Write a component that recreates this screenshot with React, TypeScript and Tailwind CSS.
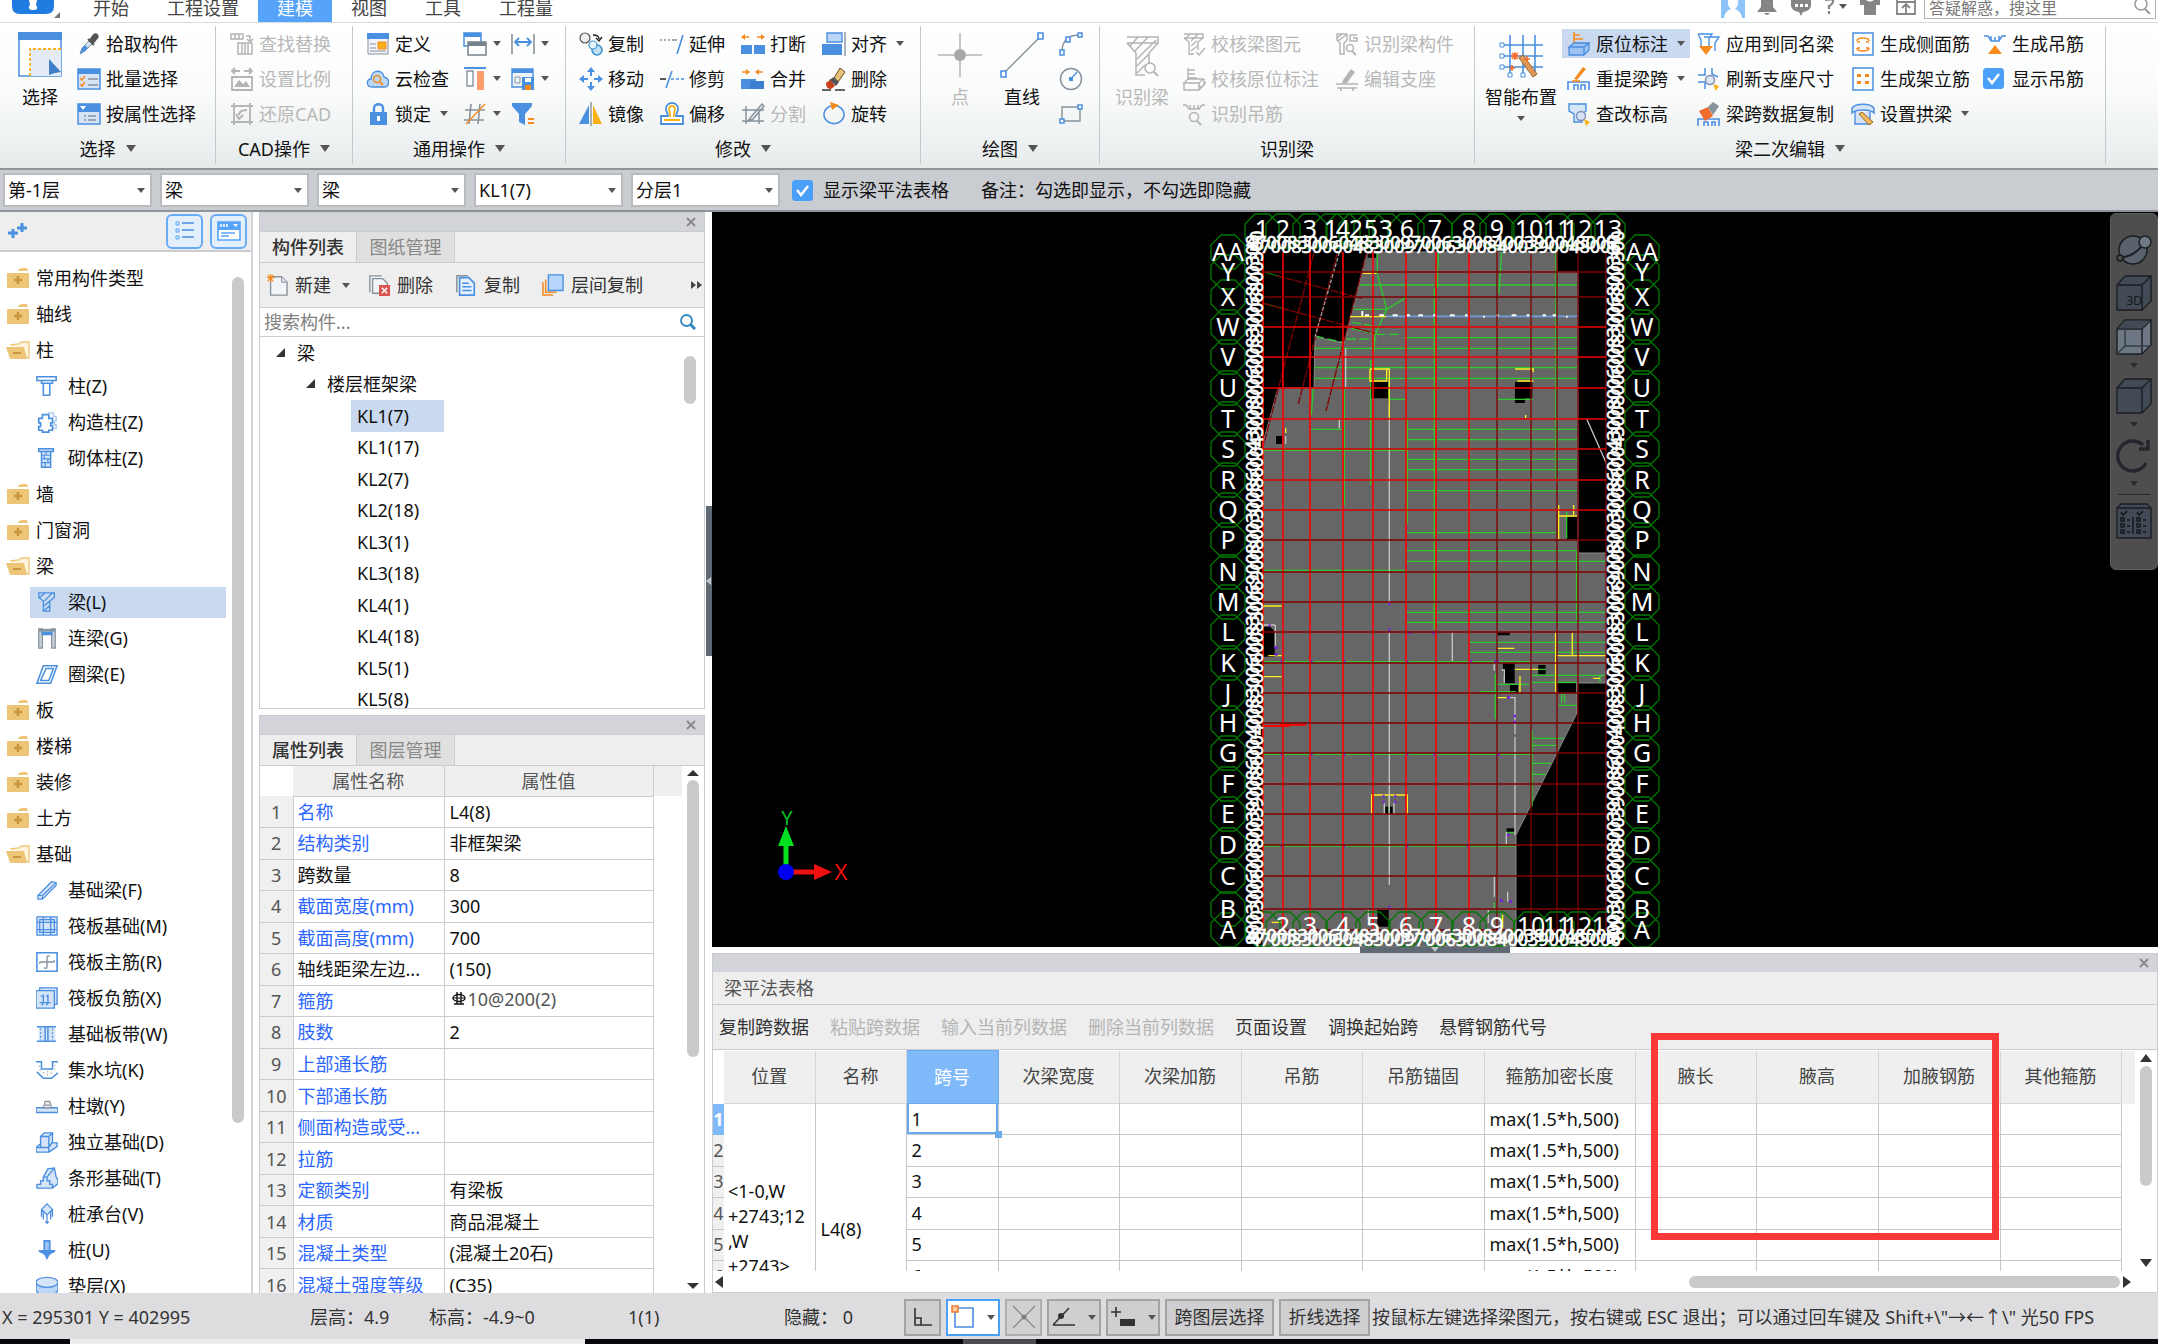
import { Fragment, useState } from "react";
import type { ReactNode } from "react";

const BLUE = "#4a8fe0";
const PALE = "#d6e4f7";
const ORANGE = "#f58a1f";
const YELLOW = "#f9b115";
const STEEL = "#87929c";
const OFF = "#b4b4b4";

// All small icons are drawn on a 24x24 board
const icons: Record<string, ReactNode> = {
  pick: (
    <>
      <path d="M3 22l2-6 8-8 3 3-8 8z" fill="#cfe3f8" stroke={STEEL} />
      <path d="M3 22l2-6 3-3 3 3-3 3z" fill={BLUE} />
      <path d="M11 7l6 6M13 8l4-5c2-2 5 1 3 3l-4 5z" fill="#555" stroke="#555" strokeWidth="2" />
    </>
  ),
  batch: (
    <>
      <path d="M1 2h22v20H1z" fill={PALE} stroke={BLUE} strokeWidth="1.5" />
      <path d="M1 2h22v5H1z" fill={BLUE} />
      <path d="M3 11l2 2 3-4M3 17l2 2 3-4" fill="none" stroke={ORANGE} strokeWidth="1.5" />
      <path d="M11 12h10M11 18h10" stroke={STEEL} strokeWidth="1.5" />
    </>
  ),
  byProp: (
    <>
      <path d="M1 2h22v20H1z" fill={PALE} stroke={BLUE} strokeWidth="1.5" />
      <path d="M1 2h22v8H1z" fill={BLUE} />
      <path d="M3 4h6L6 8z" fill="#fff" />
      <path d="M7 14h2M11 14h8M7 18h2M11 18h8" stroke={STEEL} strokeWidth="1.5" />
    </>
  ),
  findReplace: (
    <>
      <path d="M1 2h12v5H1zM5 2v5M9 2v5M8 11h14v11H8zM12 11v11M15 11v11M18 11v11" fill="none" stroke={OFF} strokeWidth="1.5" />
      <path d="M16 4h4v5M17 7l3 3 3-3" fill="none" stroke={OFF} strokeWidth="1.5" />
    </>
  ),
  scale: (
    <>
      <path d="M2 4h8M14 4h8M5 1L2 4l3 3M19 1l3 3-3 3" fill="none" stroke={OFF} strokeWidth="1.8" />
      <path d="M2 10h20v13H2z" fill="none" stroke={OFF} strokeWidth="1.8" />
      <path d="M4 20l5-7 4 4 3-3 4 6z" fill={OFF} />
    </>
  ),
  restore: (
    <>
      <path d="M1 4h22M4 1v22M20 1v22M1 20h22" fill="none" stroke={OFF} strokeWidth="1.8" />
      <path d="M9 13c0-4 3-5 8-5M6 12l3 5 4-4" fill="none" stroke={OFF} strokeWidth="2" />
    </>
  ),
  define: (
    <>
      <path d="M2 2h20v20H2z" fill="#f1f5fa" stroke={STEEL} />
      <path d="M1 1h22v6H1z" fill={BLUE} />
      <path d="M12 10h8v7h-8z" fill={YELLOW} stroke={ORANGE} />
      <path d="M4 12h6M4 16h6M4 19h16" stroke={STEEL} />
    </>
  ),
  cloud: (
    <>
      <path d="M6 20c-6 0-6-8-1-8 0-10 12-10 13-2 6 1 6 10 0 10z" fill="#bcd8f7" stroke={BLUE} strokeWidth="1.3" />
      <circle cx="11" cy="12" r="3.5" fill="none" stroke={ORANGE} strokeWidth="1.5" />
      <path d="M14 15l3 3" stroke={ORANGE} strokeWidth="1.8" />
    </>
  ),
  lock: (
    <>
      <path d="M8 11V6c0-5 9-5 9 0v5" fill="none" stroke={BLUE} strokeWidth="2.4" />
      <path d="M4 10h17v13H4z" fill={BLUE} />
      <path d="M11 14h3v5h-3z" fill="#fff" />
    </>
  ),
  windows: (
    <>
      <path d="M1 1h17v13H1z" fill="#fff" stroke={BLUE} strokeWidth="1.5" />
      <path d="M1 1h17v4H1z" fill={BLUE} />
      <path d="M5 10h18v13H5z" fill="#fff" stroke="#77828c" strokeWidth="1.5" />
      <path d="M5 10h18v4H5z" fill="#77828c" />
    </>
  ),
  dimension: (
    <>
      <path d="M1 2v20M23 2v20" stroke={STEEL} strokeWidth="1.6" />
      <path d="M4 10h16M8 6l-4 4 4 4M16 6l4 4-4 4" fill="none" stroke={BLUE} strokeWidth="1.8" />
    </>
  ),
  columns: (
    <>
      <path d="M1 1h22" stroke={BLUE} strokeWidth="2" />
      <path d="M4 4h6v15H4z" fill="#fff" stroke={STEEL} strokeWidth="1.4" />
      <path d="M14 4h7v19h-7z" fill="#fd9c6d" />
    </>
  ),
  saveAs: (
    <>
      <path d="M1 2h21v18H1z" fill="#eef3fa" stroke={BLUE} strokeWidth="1.4" />
      <path d="M1 2h21v4H1z" fill={BLUE} />
      <path d="M4 10h5v6H4z" fill="none" stroke={STEEL} />
      <path d="M11 10h12v13H11z" fill={BLUE} />
      <path d="M14 11h6v4h-6z" fill="#fff" />
      <path d="M14 18h6v5h-6z" fill={ORANGE} />
    </>
  ),
  axisGrid: (
    <>
      <path d="M2 8h20M1 18h20M8 2L6 22M17 2l-2 20" stroke={STEEL} strokeWidth="1.6" fill="none" />
      <path d="M22 2L3 22" stroke={ORANGE} strokeWidth="1.4" />
    </>
  ),
  filter: (
    <>
      <path d="M1 1h20v3l-7 8v11l-6-3v-8L1 4z" fill={BLUE} />
      <path d="M17 17h6M17 21h6" stroke={ORANGE} strokeWidth="1.8" />
    </>
  ),
  copy: (
    <>
      <circle cx="6" cy="6" r="5" fill="#eee" stroke="#555" strokeWidth="1.2" />
      <circle cx="18" cy="18" r="5" fill="#bfe0f8" stroke="#3f8fc9" strokeWidth="1.6" />
      <circle cx="14" cy="13" r="4" fill="#e6f3fc" stroke="#3f8fc9" strokeWidth="1.2" />
      <path d="M14 3c5 0 6 2 6 4M17 6l3 3 3-4" fill="none" stroke="#222" strokeWidth="1.4" />
    </>
  ),
  move: <path d="M12 0l4 5h-3v4h-2V5H8zM12 24l4-5h-3v-4h-2v4H8zM0 12l5-4v3h4v2H5v3zM24 12l-5-4v3h-4v2h4v3z" fill={BLUE} />,
  mirror: (
    <>
      <path d="M10 3v19H0z" fill={BLUE} />
      <path d="M14 3v19h9z" fill={YELLOW} />
      <path d="M12 0v24" stroke={STEEL} strokeWidth="1.4" />
    </>
  ),
  extend: (
    <>
      <path d="M0 8h2M4 8h2M8 8h2M12 8h5" stroke={STEEL} strokeWidth="1.5" />
      <path d="M23 3l-6 19" stroke={BLUE} strokeWidth="1.6" />
    </>
  ),
  trim: (
    <>
      <path d="M0 12h6" stroke="#444" strokeWidth="1.8" />
      <path d="M12 4L6 21M11 12h3M16 12h3M21 12h3" stroke={BLUE} strokeWidth="1.6" />
    </>
  ),
  offset: (
    <>
      <path d="M1 22v-8h7c0-3-2-4-2-7 0-8 12-8 12 0 0 3-2 4-2 7h7v8z" fill="#fff" stroke={BLUE} strokeWidth="1.8" />
      <path d="M4 18h16M10 15c1-4-1-5-1-8 0-4 6-4 6 0 0 3-2 4-1 8" fill="none" stroke={YELLOW} strokeWidth="1.8" />
    </>
  ),
  breakAt: (
    <>
      <path d="M0 13h11v9H0zM13 13h11v9H13z" fill={BLUE} />
      <path d="M4 2L0 5l4 3zM20 2l4 3-4 3z" fill={ORANGE} />
      <path d="M3 5h5M16 5h5" stroke={ORANGE} strokeWidth="1.6" />
    </>
  ),
  merge: (
    <>
      <path d="M0 12h15v10H0z" fill={BLUE} />
      <path d="M9 14h14v8H9z" fill="#3d7fd0" />
      <path d="M5 2l4 3-4 3zM18 2l-4 3 4 3z" fill={ORANGE} />
      <path d="M1 5h5M17 5h5" stroke={ORANGE} strokeWidth="1.6" />
    </>
  ),
  split: <path d="M1 8h22M1 19h22M5 4v18M18 8v14M21 2L10 15l-3 4 5-2L23 4z" fill="none" stroke={STEEL} strokeWidth="1.5" />,
  align: (
    <>
      <path d="M5 1h15v9H5z" fill="#bcd6f7" stroke={BLUE} strokeWidth="1.4" />
      <path d="M0 12h20v11H0z" fill={BLUE} />
      <path d="M23 0v24" stroke={STEEL} strokeWidth="1.4" />
    </>
  ),
  erase: (
    <>
      <path d="M12 11l6-10 5 4-7 10z" fill="#e8c27a" stroke="#6b4a1d" />
      <path d="M7 13l5-3 5 5-3 4z" fill="#555" />
      <path d="M4 16l4-3 5 6-4 3c-4 0-5-3-5-6z" fill="#c8401a" />
      <path d="M0 23h9M13 23h10" stroke="#333" strokeWidth="1.6" />
    </>
  ),
  rotate: (
    <>
      <path d="M15 4a10 9 0 1 1-6 0" fill="none" stroke={BLUE} strokeWidth="1.6" />
      <path d="M8 0l9 3-7 5z" fill={ORANGE} />
    </>
  ),
  arc: (
    <>
      <path d="M3 20C3 9 9 3 21 3" fill="none" stroke={STEEL} strokeWidth="1.3" />
      <path d="M1 18h4v5H1zM7 5h4v5H7zM19 1h4v4h-4z" fill="#fff" stroke={BLUE} strokeWidth="1.5" />
    </>
  ),
  circle: (
    <>
      <circle cx="12" cy="12" r="10.5" fill="none" stroke={STEEL} strokeWidth="1.5" />
      <path d="M12 12l6-7" stroke={BLUE} strokeWidth="1.3" />
      <path d="M10 10h4v4h-4z" fill={BLUE} />
    </>
  ),
  rect: (
    <>
      <path d="M3 5h18v14H3z" fill="none" stroke={STEEL} strokeWidth="1.4" />
      <path d="M1 17h4v4H1zM19 3h4v4h-4z" fill="#fff" stroke={BLUE} strokeWidth="1.5" />
    </>
  ),
  checkBeam: <path d="M2 2h19v4l-5 4v8M2 6l5 4v12h5M2 6h19M4 6l4-4M9 9l7-7M9 14l6-5M9 19l6-5M14 20l3 3 6-7" fill="none" stroke={OFF} strokeWidth="1.4" />,
  checkMark: <path d="M6 1v12M6 3h7M6 7h7M6 11h9M2 16l4-4h15l-4 4zM2 16h15v7H2zM17 23l5-5v-6M17 18l2 3 5-6" fill="none" stroke={OFF} strokeWidth="1.4" />,
  hangFind: (
    <>
      <path d="M1 3h3l3 4h10l3-4h3M8 3v4M12 3v4M16 3v4" fill="none" stroke={OFF} strokeWidth="1.5" />
      <circle cx="12" cy="15" r="4.5" fill="none" stroke={OFF} strokeWidth="1.6" />
      <path d="M15 19l4 4" stroke={OFF} strokeWidth="2" />
    </>
  ),
  beamPart: (
    <>
      <path d="M2 2h10v6l-3 3v11H5V11L2 8zM2 6l5-4M3 9l8-6M15 3h7M15 3v6h7V6h-4" fill="none" stroke={OFF} strokeWidth="1.5" />
      <circle cx="15" cy="16" r="3.5" fill="none" stroke={OFF} strokeWidth="1.5" />
      <path d="M17 19l4 4" stroke={OFF} strokeWidth="2" />
    </>
  ),
  editSeat: (
    <>
      <path d="M1 17h22M2 21h20M6 21v3M18 21v3" stroke={OFF} strokeWidth="1.6" />
      <path d="M8 13l8-11 4 3-8 11-5 1z" fill={OFF} />
    </>
  ),
  inPlace: (
    <>
      <path d="M7 0v12M7 3h6M7 7h9M7 11h6" stroke={ORANGE} strokeWidth="1.6" />
      <path d="M2 15l5-4h15l-5 4zM2 15h15v8H2zM17 15l5-4v7l-5 5z" fill="#9cc3f3" stroke={BLUE} strokeWidth="1.3" />
    </>
  ),
  respan: (
    <>
      <path d="M1 23v-8h21v8M7 23v-5h4v5M14 23v-5h4v5" fill="none" stroke={BLUE} strokeWidth="1.6" />
      <path d="M7 12l9-12 3 2-9 11z" fill={ORANGE} />
      <path d="M5 14h8" stroke={ORANGE} strokeWidth="1.6" />
    </>
  ),
  elevation: (
    <>
      <path d="M2 2h17v7l-4 3v8H7v-8L2 9z" fill={PALE} stroke={BLUE} strokeWidth="1.4" />
      <circle cx="14" cy="14" r="4.5" fill="#d9e2f5" stroke="#7a8fb8" strokeWidth="1.4" />
      <path d="M17 17l6 3-4 4z" fill={YELLOW} />
    </>
  ),
  applySame: (
    <>
      <path d="M1 2h14l-3 5v7M1 2l3 6v8M7 5h15l-4 6v8" fill="#fff" stroke={BLUE} strokeWidth="1.4" />
      <path d="M2 14h14l-7 9z" fill={ORANGE} />
    </>
  ),
  refreshSeat: (
    <>
      <path d="M8 1v7H1M15 1v6l6 3M8 22v-7H1" fill="none" stroke={BLUE} strokeWidth="1.5" />
      <circle cx="13" cy="13" r="4.5" fill="#dfe6f2" stroke="#7a8fb8" strokeWidth="1.5" />
      <path d="M16 17l6 2-3 5z" fill={YELLOW} />
    </>
  ),
  spanCopy: (
    <>
      <path d="M1 24v-7h21v7M7 24v-4h4v4M15 24v-4h3v4" fill="none" stroke={BLUE} strokeWidth="1.6" />
      <path d="M2 9l9-4 5 9-8 5z" fill="#ef6c2c" />
      <path d="M11 5l5-5 6 4-6 9z" fill={STEEL} />
    </>
  ),
  sideBar: (
    <>
      <path d="M2 1h20v22H2z" fill="#fff" stroke={BLUE} strokeWidth="1.5" />
      <path d="M6 9c0-4 12-4 12 0M6 10h3M15 10h3M6 16h3M15 16h3M6 16c0 4 12 4 12 0" fill="none" stroke={ORANGE} strokeWidth="1.6" />
    </>
  ),
  erectBar: (
    <>
      <path d="M2 1h20v22H2z" fill="#fff" stroke={BLUE} strokeWidth="1.5" />
      <path d="M6 7h4v3H6zM14 7h4v3h-4zM6 14h4v3H6zM14 14h4v3h-4z" fill={ORANGE} />
    </>
  ),
  arch: (
    <>
      <path d="M1 6c4-5 18-5 22 0v5c-4-4-18-4-22 0zM4 10v12h15V10" fill={PALE} stroke={BLUE} strokeWidth="1.4" />
      <path d="M8 12l10 11 4-3-11-10z" fill="#f4b860" stroke="#9a6a26" />
    </>
  ),
  hangBar: (
    <>
      <path d="M1 4h4l3 5h8l3-5h4M8 4v4M12 5v4M16 4v4" fill="none" stroke={BLUE} strokeWidth="1.5" />
      <path d="M12 13l7 9H5z" fill={ORANGE} />
    </>
  ),
  folder: (
    <>
      <path d="M1 7h22v15H1zM12 5c1-3 3-3 5-3h4l1 3z" fill="#edc577" />
      <path d="M12 10v8M8 14h8" stroke="#c8963e" strokeWidth="2.6" />
    </>
  ),
  folderOpen: (
    <>
      <path d="M4 7l9-1 2-2h8v16h-4" fill="#fdf3dc" stroke="#edc577" strokeWidth="1.3" />
      <path d="M0 9h18l3 12H4z" fill="#edc577" />
      <path d="M7 15h8" stroke="#c8963e" strokeWidth="2" />
    </>
  ),
  column: <path d="M1 2h21v4h-4v3H6V6H1zM6 6h12M8 9h7v13H8z" fill="#fff" stroke={BLUE} strokeWidth="1.7" />,
  structColumn: (
    <>
      <path d="M13 2h6v4h3v5h-2v4h2v4h-4" fill="none" stroke="#a9c8ee" strokeWidth="1.5" />
      <path d="M7 4h7v4h4v5h-2v3h2v5h-4v2H7v-2H3v-4h2v-4H3V8h4z" fill="#fff" stroke={BLUE} strokeWidth="1.8" />
    </>
  ),
  brickColumn: (
    <>
      <path d="M3 2h16v3H3zM6 5h10v17H6z" fill={PALE} stroke={BLUE} strokeWidth="1.6" />
      <path d="M6 9h10M6 13h10M6 17h10M11 5v4M9 9v4M13 13v4M10 17v5" stroke={BLUE} strokeWidth="1.3" />
    </>
  ),
  beam: <path d="M3 2h17v5l-5 4v11H8V11L3 7zM4 7l6-5M9 11l9-9M9 16l6-5M9 21l6-5" fill="none" stroke={BLUE} strokeWidth="1.4" />,
  linkBeam: (
    <>
      <path d="M3 2h4v21H3zM17 2h4v21h-4z" fill="#c7cfd4" stroke={STEEL} strokeWidth="1.3" />
      <path d="M3 2h18v3H3z" fill={STEEL} />
      <path d="M6 5h12v4H6z" fill={BLUE} />
    </>
  ),
  ringBeam: <path d="M8 3h15l-7 19H1zM11 6h8l-5 13H5z" fill="none" stroke={BLUE} strokeWidth="1.7" />,
  footBeam: <path d="M2 18L17 3l5 1v3L7 22H2zM2 18h5v4M7 18L22 4" fill={PALE} stroke={BLUE} strokeWidth="1.3" />,
  raft: <path d="M1 2h22v20H1zM4 5h16v14H4zM8 8h8v8H8zM1 8h7M16 8h7M1 16h7M16 16h7M8 2v6M16 2v6M8 16v6M16 16v6" fill={PALE} stroke={BLUE} strokeWidth="1.4" />,
  raftMain: (
    <>
      <path d="M1 2h22v20H1z" fill="#fff" stroke={BLUE} strokeWidth="1.7" />
      <path d="M4 12h16M12 6v12M4 12v2M20 12v-2M12 6c1-1 3-1 3 0M12 18c-1 1-3 1-3 0" fill="none" stroke={STEEL} strokeWidth="1.5" />
    </>
  ),
  raftNeg: (
    <>
      <path d="M4 4V1h19v18h-3M0 4h20v19H0z" fill={PALE} stroke={BLUE} strokeWidth="1.5" />
      <path d="M4 17h12M8 8v10M13 8v10M5 10h3M11 10h2M6 20l2-2M11 20l2-2" stroke={BLUE} strokeWidth="1.5" />
    </>
  ),
  strip: (
    <>
      <path d="M3 4h18v15H3z" fill={PALE} />
      <path d="M1 4h21M1 20h21M10 4v16M13 4v16" stroke={BLUE} strokeWidth="1.6" />
      <path d="M5 6v13M18 6v13" stroke={BLUE} strokeWidth="1.3" strokeDasharray="2 2" />
    </>
  ),
  pit: (
    <>
      <path d="M0 3h6v8h12V3h6M1 14l7 7h9l7-6" fill="none" stroke={BLUE} strokeWidth="1.7" />
      <path d="M3 8h1M4 12h1M8 15h1M12 17h1M16 15h1M20 11h1M20 7h1M12 14h1" stroke={STEEL} strokeWidth="1.5" />
    </>
  ),
  pier: (
    <>
      <path d="M0 14h24v5H0z" fill={PALE} stroke={BLUE} strokeWidth="1.6" />
      <path d="M8 14l2-7h5l2 7zM10 11h5" fill="#eee" stroke={STEEL} strokeWidth="1.3" />
    </>
  ),
  isolated: <path d="M0 18h14v5H0zM14 23l9-6v-4h-6M0 18l5-4M5 6h9v12H5zM5 6l4-4h9v10l-4 6M14 6l4-4" fill={PALE} stroke={BLUE} strokeWidth="1.5" />,
  stripFoot: <path d="M1 23v-4h4v-4h3v-4h4v4h3v4h3v4zM8 11l5-9 7-1 2 10 2 3v4l-6 5M12 11l8-10" fill={PALE} stroke={BLUE} strokeWidth="1.5" />,
  pileCap: <path d="M12 1l6 6-6 6-6-6zM6 7v8M18 7v8M12 13v10M8 10v8M16 10v8M10 21h4" fill={PALE} stroke={BLUE} strokeWidth="1.4" />,
  pile: (
    <>
      <path d="M9 2h6v14H9z" fill="#9cc3f3" stroke={BLUE} strokeWidth="1.8" />
      <path d="M3 12h18v2l-6 3-3 6-3-6-6-3z" fill={BLUE} />
    </>
  ),
  cushion: (
    <>
      <path d="M0 8v8c2 8 22 8 24 0V8" fill="#bcd6f7" stroke={BLUE} strokeWidth="1.4" />
      <ellipse cx="12" cy="8" rx="12" ry="5.5" fill={PALE} stroke={BLUE} strokeWidth="1.4" />
    </>
  ),
  newDoc: (
    <>
      <path d="M5 3h12l6 6v14H5z" fill="#f2f5f7" stroke={STEEL} strokeWidth="1.5" />
      <path d="M17 3v6h6" fill="#dde3e8" stroke={STEEL} />
      <path d="M5 0v9M1 4h9M2 1l6 7M8 1L2 8" stroke={ORANGE} strokeWidth="1.3" />
    </>
  ),
  deleteDoc: (
    <>
      <path d="M2 20V2h13M5 5h11l5 5v11H5z" fill="#f2f5f7" stroke={STEEL} strokeWidth="1.5" />
      <path d="M12 12h12v12H12z" fill="#d9534f" />
      <path d="M15 15l6 6M21 15l-6 6" stroke="#fff" strokeWidth="1.6" />
    </>
  ),
  copyDoc: (
    <>
      <path d="M2 20V2h12" fill="none" stroke={STEEL} strokeWidth="1.6" />
      <path d="M5 4h10l6 6v13H5z" fill="#e6f0fc" stroke={BLUE} strokeWidth="1.8" />
      <path d="M8 10h7M8 14h10M8 18h10" stroke={BLUE} strokeWidth="1.6" />
    </>
  ),
  floorCopy: (
    <>
      <path d="M1 9v14h11M4 6v14h12" fill="none" stroke={ORANGE} strokeWidth="1.7" />
      <path d="M7 1h16v17H7z" fill="#b5d5fb" stroke={BLUE} strokeWidth="1.5" />
    </>
  ),
};

function Icon({ name, className = "size-6" }: { name: string; className?: string }) {
  return (
    <svg viewBox="0 0 24 24" className={`shrink-0 ${className}`} fill="none" aria-hidden="true">
      {icons[name]}
    </svg>
  );
}

function Caret({ className = "" }: { className?: string }) {
  return (
    <svg viewBox="0 0 8 5" className={`h-[5px] w-2 shrink-0 ${className}`} aria-hidden="true">
      <path d="M0 0h8L4 5z" fill="#555" />
    </svg>
  );
}

function Check({ label, className = "" }: { label: string; className?: string }) {
  const [on, setOn] = useState(true);
  return (
    <label className={`flex items-center whitespace-nowrap ${className}`}>
      <span className="grid size-[21px]">
        <input
          type="checkbox"
          checked={on}
          onChange={() => setOn(!on)}
          className="col-start-1 row-start-1 size-[21px] appearance-none rounded-[3px] border border-[#4a9ff9] bg-white checked:bg-[#4a9ff9]"
        />
        {on && (
          <svg viewBox="0 0 21 21" className="pointer-events-none col-start-1 row-start-1 size-[21px]" aria-hidden="true">
            <path d="M5 10l4 5 7-9" fill="none" stroke="#fff" strokeWidth="2.4" />
          </svg>
        )}
      </span>
      {label}
    </label>
  );
}

type ToolProps = { icon: string; label?: string; caret?: boolean; off?: boolean };

function Tool({ icon, label, caret, off }: ToolProps) {
  return (
    <button disabled={off} className={`flex h-[35px] items-center gap-[5px] whitespace-nowrap ${off ? "text-[#b8b8b8]" : ""}`}>
      <Icon name={icon} />
      {label}
      {caret && <Caret className={label ? "ml-1" : "ml-px"} />}
    </button>
  );
}

type GroupProps = { title: string; caret?: boolean; className: string; inner: string; children: ReactNode };

function Group({ title, caret = true, className, inner, children }: GroupProps) {
  return (
    <section className={`mt-[3px] flex h-[138px] shrink-0 flex-col border-r border-[#c6c9cb] ${className}`}>
      <div className={`flex h-[107px] items-start ${inner}`}>{children}</div>
      <div className="flex h-[31px] items-center justify-center gap-2.5">
        {title}
        {caret && (
          <svg viewBox="0 0 10 7" className="h-[7px] w-2.5" aria-hidden="true">
            <path d="M0 0h10L5 7z" fill="#555" />
          </svg>
        )}
      </div>
    </section>
  );
}

function Ribbon() {
  return (
    <div className="flex h-[146px] shrink-0 overflow-hidden border-t border-[#d9dcdd] bg-linear-to-b from-white via-[#fafbfb] to-[#e6ebeb]">
      <Group title="选择" className="w-[216px]" inner="pl-3.5">
        <button className="flex w-[52px] flex-col items-center gap-[7px] pt-1.5">
          <svg viewBox="0 0 44 46" className="h-[46px] w-11" aria-hidden="true">
            <path d="M1 1h42v43H1z" fill="#fff" stroke={BLUE} strokeWidth="1.5" />
            <path d="M0 0h44v8H0z" fill={BLUE} />
            <path d="M12 17h31v27H12z" fill="#e4eaf6" />
            <path d="M12 44V17h31" fill="none" stroke={YELLOW} strokeWidth="1.8" strokeDasharray="3 2" />
            <path d="M31 27l12 13-6 1-6 2z" fill="#3f7fc8" />
          </svg>
          <span className="leading-6">选择</span>
        </button>
        <div className="ml-[11px]">
          <Tool icon="pick" label="拾取构件" />
          <Tool icon="batch" label="批量选择" />
          <Tool icon="byProp" label="按属性选择" />
        </div>
      </Group>

      <Group title="CAD操作" className="w-[137px]" inner="pl-3.5">
        <div>
          <Tool icon="findReplace" label="查找替换" off />
          <Tool icon="scale" label="设置比例" off />
          <Tool icon="restore" label="还原CAD" off />
        </div>
      </Group>

      <Group title="通用操作" className="w-[213px]" inner="pl-[13px]">
        <div className="w-[97px]">
          <Tool icon="define" label="定义" />
          <Tool icon="cloud" label="云检查" />
          <Tool icon="lock" label="锁定" caret />
        </div>
        <div className="w-12">
          <Tool icon="windows" caret />
          <Tool icon="columns" caret />
          <Tool icon="axisGrid" caret />
        </div>
        <div>
          <Tool icon="dimension" caret />
          <Tool icon="saveAs" caret />
          <Tool icon="filter" />
        </div>
      </Group>

      <Group title="修改" className="w-[355px]" inner="pl-[13px]">
        <div className="w-[81px]">
          <Tool icon="copy" label="复制" />
          <Tool icon="move" label="移动" />
          <Tool icon="mirror" label="镜像" />
        </div>
        <div className="w-[81px]">
          <Tool icon="extend" label="延伸" />
          <Tool icon="trim" label="修剪" />
          <Tool icon="offset" label="偏移" />
        </div>
        <div className="w-[81px]">
          <Tool icon="breakAt" label="打断" />
          <Tool icon="merge" label="合并" />
          <Tool icon="split" label="分割" off />
        </div>
        <div>
          <Tool icon="align" label="对齐" caret />
          <Tool icon="erase" label="删除" />
          <Tool icon="rotate" label="旋转" />
        </div>
      </Group>

      <Group title="绘图" className="w-[179px]" inner="pl-[9px]">
        <button disabled className="flex w-[60px] flex-col items-center gap-[7px] pt-1.5 text-[#b8b8b8]">
          <svg viewBox="0 0 44 46" className="h-[46px] w-11" aria-hidden="true">
            <path d="M22 1v44M0 23h44" stroke={OFF} strokeWidth="1.5" />
            <circle cx="22" cy="23" r="6" fill="#a9a9a9" />
          </svg>
          <span className="leading-6">点</span>
        </button>
        <button className="flex w-16 flex-col items-center gap-[7px] pt-1.5">
          <svg viewBox="0 0 44 46" className="h-[46px] w-11" aria-hidden="true">
            <path d="M3 42L41 4" stroke={STEEL} strokeWidth="1.5" />
            <path d="M1 39h5v6H1zM38 1h5v6h-5z" fill="#fff" stroke={BLUE} strokeWidth="1.6" />
          </svg>
          <span className="leading-6">直线</span>
        </button>
        <div className="ml-[5px]">
          <Tool icon="arc" />
          <Tool icon="circle" />
          <Tool icon="rect" />
        </div>
      </Group>

      <Group title="识别梁" caret={false} className="w-[375px]" inner="pl-1">
        <button disabled className="flex w-[76px] flex-col items-center gap-[7px] pt-1.5 text-[#b8b8b8]">
          <svg viewBox="0 0 44 46" className="h-[46px] w-11" aria-hidden="true">
            <path d="M7 5h31v6l-9 10v12M7 11l9 10v22h9M7 11h31M10 14l8-9M15 19L28 5M17 27L36 8M17 34l12-12M17 41l8-8" fill="none" stroke={OFF} strokeWidth="1.5" />
            <circle cx="30" cy="36" r="5" fill="#fff" stroke={OFF} strokeWidth="1.5" />
            <path d="M34 40l4 4" stroke={OFF} strokeWidth="2" />
          </svg>
          <span className="leading-6">识别梁</span>
        </button>
        <div className="ml-0.5 w-[153px]">
          <Tool icon="checkBeam" label="校核梁图元" off />
          <Tool icon="checkMark" label="校核原位标注" off />
          <Tool icon="hangFind" label="识别吊筋" off />
        </div>
        <div>
          <Tool icon="beamPart" label="识别梁构件" off />
          <Tool icon="editSeat" label="编辑支座" off />
        </div>
      </Group>

      <Group title="梁二次编辑" className="w-[631px]" inner="pl-[5px]">
        <button className="flex w-[82px] flex-col items-center gap-[7px] pt-1.5">
          <svg viewBox="0 0 44 46" className="h-[46px] w-11" aria-hidden="true">
            <path d="M3 13h41M3 24h41M3 35h41M11 3v41M24 3v41M36 3v41" stroke={BLUE} strokeWidth="1.6" />
            <path d="M1 11h4v4H1zM1 22h4v4H1zM1 33h4v4H1zM9 41h4v4H9zM22 41h4v4h-4z" fill="#fff" stroke={BLUE} />
            <path d="M20 26l4-3 14 19-4 3z" fill="#e09a55" stroke="#9a6a36" />
            <path d="M16 20v8M12 24h8M13 21l6 6M19 21l-6 6M28 24v6M25 27h6M13 33v6M10 36h6" stroke="#f26b2c" strokeWidth="1.5" />
          </svg>
          <span className="leading-6">智能布置</span>
          <Caret />
        </button>
        <div className="w-[128px]">
          <button aria-pressed="true" className="my-[3px] flex h-[29px] w-full items-center gap-[5px] bg-[#c8d9f0] px-[5px] whitespace-nowrap">
            <Icon name="inPlace" />
            原位标注
            <Caret className="ml-1" />
          </button>
          <div className="px-[5px]">
            <Tool icon="respan" label="重提梁跨" caret />
            <Tool icon="elevation" label="查改标高" />
          </div>
        </div>
        <div className="ml-[7px] w-[154px]">
          <Tool icon="applySame" label="应用到同名梁" />
          <Tool icon="refreshSeat" label="刷新支座尺寸" />
          <Tool icon="spanCopy" label="梁跨数据复制" />
        </div>
        <div className="w-[132px]">
          <Tool icon="sideBar" label="生成侧面筋" />
          <Tool icon="erectBar" label="生成架立筋" />
          <Tool icon="arch" label="设置拱梁" caret />
        </div>
        <div>
          <Tool icon="hangBar" label="生成吊筋" />
          <Check label="显示吊筋" className="h-[35px] gap-2" />
        </div>
      </Group>
    </div>
  );
}

const tabs = ["开始", "工程设置", "建模", "视图", "工具", "工程量"];

function TabBar() {
  return (
    <header className="flex h-[22px] shrink-0 items-start overflow-hidden bg-white text-[#444]">
      <div className="flex w-[74px] items-start pl-3">
        <svg viewBox="0 0 50 20" className="h-5 w-[50px]" aria-label="logo">
          <path d="M0 0h42v6q0 8-8 8H8Q0 14 0 6z" fill="#1e7be0" />
          <path d="M17 0h8l-1 5q3 4-1 5h-4q-4-2-1-5z" fill="#fff" />
          <path d="M48 12v6h-6z" fill="#777" />
        </svg>
      </div>
      {tabs.map((t) => (
        <button key={t} className={`h-[22px] px-[19px] pb-1.5 leading-4 ${t === "建模" ? "bg-[#55a4fa] text-white" : ""}`}>
          {t}
        </button>
      ))}
      <div className="ml-auto flex items-start">
        <button aria-label="用户" className="flex w-[34px] justify-center">
          <svg viewBox="0 0 24 18" className="h-[18px] w-6">
            <path d="M0 0h24v18H0z" fill="#8cc3fb" />
            <path d="M7 0h10q1 6-3 9 6 2 7 9H3q1-7 7-9-4-3-3-9z" fill="#fff" />
          </svg>
        </button>
        <button aria-label="通知" className="flex w-[34px] justify-center">
          <svg viewBox="0 0 20 16" className="h-4 w-5">
            <path d="M4 0h12v7l4 5H0l4-5zM7 13h6q-3 4-6 0z" fill="#858585" />
          </svg>
        </button>
        <button aria-label="消息" className="flex w-[34px] justify-center">
          <svg viewBox="0 0 22 16" className="h-4 w-[22px]">
            <path d="M1 0h20v6q-1 5-8 6l-2 4-2-4Q2 11 1 6z" fill="#858585" />
            <path d="M5 4h3v3H5zM10 4h3v3h-3zM15 4h3v3h-3z" fill="#fff" />
          </svg>
        </button>
        <button aria-label="帮助" className="flex w-[34px] justify-center gap-1">
          <svg viewBox="0 0 12 14" className="h-3.5 w-3">
            <path d="M2 0q9-2 8 2-1 3-4 4v3M6 11v3" fill="none" stroke="#858585" strokeWidth="2.2" />
          </svg>
          <Caret className="mt-1" />
        </button>
        <button aria-label="皮肤" className="flex w-9 justify-center">
          <svg viewBox="0 0 20 15" className="h-[15px] w-5">
            <path d="M0 0h6q4 3 8 0h6v5h-4v10H4V5H0z" fill="#858585" />
          </svg>
        </button>
        <button aria-label="收起" className="flex w-9 justify-center">
          <svg viewBox="0 0 20 15" className="h-[15px] w-5">
            <path d="M1 0v14h18V0M1 2h18M10 13V5M6 8l4-4 4 4" fill="none" stroke="#858585" strokeWidth="1.8" />
          </svg>
        </button>
        <div className="mr-0.5 flex h-[19px] w-[232px] items-start border border-t-0 border-[#b5b5b5] px-1">
          <input aria-label="搜索" placeholder="答疑解惑，搜这里" className="h-4 min-w-0 flex-1 text-base leading-4 placeholder:text-[#777] outline-none" />
          <svg viewBox="0 0 18 14" className="h-3.5 w-[18px]" aria-hidden="true">
            <circle cx="8" cy="4" r="6" fill="none" stroke="#999" strokeWidth="1.5" />
            <path d="M12 9l5 5" stroke="#999" strokeWidth="2" />
          </svg>
        </div>
      </div>
    </header>
  );
}

const pickers = [
  { label: "楼层", value: "第-1层" },
  { label: "构件类型", value: "梁" },
  { label: "构件", value: "梁" },
  { label: "名称", value: "KL1(7)" },
  { label: "分层", value: "分层1" },
];

function OptionBar() {
  return (
    <div className="flex h-11 shrink-0 items-center border-t-2 border-b-2 border-t-[#8f9297] border-b-[#8f9499] bg-[#c9ccd1] pl-[3px]">
      <div className="flex gap-2">
        {pickers.map((p) => (
          <div key={p.label} className="relative h-[34px] w-[149px]">
            <select aria-label={p.label} className="h-full w-full appearance-none border-2 border-[#b9bbbe] bg-white pl-[3px] text-[18px]">
              <option>{p.value}</option>
            </select>
            <Caret className="pointer-events-none absolute top-[15px] right-[7px]" />
          </div>
        ))}
      </div>
      <Check label="显示梁平法表格" className="ml-3 gap-2.5" />
      <span className="ml-8">备注：勾选即显示，不勾选即隐藏</span>
    </div>
  );
}

type Node = { icon: string; label: string; child?: boolean };

const nav: Node[] = [
  { icon: "folder", label: "常用构件类型" },
  { icon: "folder", label: "轴线" },
  { icon: "folderOpen", label: "柱" },
  { icon: "column", label: "柱(Z)", child: true },
  { icon: "structColumn", label: "构造柱(Z)", child: true },
  { icon: "brickColumn", label: "砌体柱(Z)", child: true },
  { icon: "folder", label: "墙" },
  { icon: "folder", label: "门窗洞" },
  { icon: "folderOpen", label: "梁" },
  { icon: "beam", label: "梁(L)", child: true },
  { icon: "linkBeam", label: "连梁(G)", child: true },
  { icon: "ringBeam", label: "圈梁(E)", child: true },
  { icon: "folder", label: "板" },
  { icon: "folder", label: "楼梯" },
  { icon: "folder", label: "装修" },
  { icon: "folder", label: "土方" },
  { icon: "folderOpen", label: "基础" },
  { icon: "footBeam", label: "基础梁(F)", child: true },
  { icon: "raft", label: "筏板基础(M)", child: true },
  { icon: "raftMain", label: "筏板主筋(R)", child: true },
  { icon: "raftNeg", label: "筏板负筋(X)", child: true },
  { icon: "strip", label: "基础板带(W)", child: true },
  { icon: "pit", label: "集水坑(K)", child: true },
  { icon: "pier", label: "柱墩(Y)", child: true },
  { icon: "isolated", label: "独立基础(D)", child: true },
  { icon: "stripFoot", label: "条形基础(T)", child: true },
  { icon: "pileCap", label: "桩承台(V)", child: true },
  { icon: "pile", label: "桩(U)", child: true },
  { icon: "cushion", label: "垫层(X)", child: true },
];

function Sidebar() {
  const [active, setActive] = useState("梁(L)");
  return (
    <aside className="flex w-[253px] shrink-0 flex-col border-r-2 border-[#d0d3d8]">
      <div className="flex h-10 shrink-0 items-center gap-[7px] border-b-2 border-[#c9ccd2] bg-[#eee] pr-1 pl-2">
        <svg viewBox="0 0 20 16" className="mr-auto h-4 w-5" aria-hidden="true">
          <path d="M5 6v9M0 10h10M14 0v9M9 5h10" stroke={BLUE} strokeWidth="3" />
        </svg>
        <button aria-label="列表" className="flex h-[35px] w-[37px] items-center justify-center rounded-md border-2 border-[#6aabf5] bg-[#e4effc]">
          <svg viewBox="0 0 20 20" className="size-5">
            <path d="M1 1h3v3H1zM1 8h3v3H1zM1 15h3v3H1z" fill="none" stroke="#55a4fa" />
            <path d="M7 2h12M7 9h12M7 16h12" stroke={BLUE} strokeWidth="1.5" />
          </svg>
        </button>
        <button aria-label="面板" className="flex h-[35px] w-[37px] items-center justify-center rounded-md border-2 border-[#6aabf5] bg-[#e4effc]">
          <svg viewBox="0 0 24 20" className="h-5 w-6">
            <path d="M1 1h22v18H1z" fill="#fff" stroke="#55a4fa" strokeWidth="1.6" />
            <path d="M1 1h22v8H1z" fill="#55a4fa" />
            <path d="M4 3v3M7 3v3M10 3v3" stroke="#fff" strokeWidth="1.6" />
            <path d="M16 3h5l-2 3z" fill="#fff" />
            <path d="M4 12h14M4 15h8" stroke="#55a4fa" strokeWidth="1.4" />
          </svg>
        </button>
      </div>
      <div className="flex min-h-0 flex-1 overflow-hidden">
        <ul className="flex-1 pt-2">
          {nav.map((n) => (
            <li key={n.label} className={`flex h-9 items-center ${n.child ? "pl-[30px]" : "pl-1.5"}`}>
              <button
                onClick={() => setActive(n.label)}
                className={`flex h-[31px] w-full items-center ${n.child ? "gap-2.5 pl-1.5" : "gap-1.5"} ${active === n.label ? "bg-[#c8d9f0]" : ""}`}
              >
                <Icon name={n.icon} className={n.child ? "size-[22px]" : "size-6"} />
                {n.label}
              </button>
            </li>
          ))}
        </ul>
        <div className="mt-[25px] mr-[7px] ml-1.5 h-[846px] w-3 rounded-full bg-[#cacaca]" />
      </div>
    </aside>
  );
}

function PanelBar() {
  return (
    <div className="flex h-[18px] shrink-0 items-center justify-end bg-[#d3d4da] pr-2">
      <button aria-label="关闭" className="flex">
        <svg viewBox="0 0 10 10" className="size-2.5">
          <path d="M1 1l8 8M9 1L1 9" stroke="#888" strokeWidth="1.8" />
        </svg>
      </button>
    </div>
  );
}

function PanelTabs({ on, off }: { on: string; off: string }) {
  return (
    <div className="flex h-8 shrink-0 border-y border-[#c9ccd1] bg-[#eee]">
      <button className="w-[97px] border-r border-[#c9ccd1] font-medium text-[#333]">{on}</button>
      <button className="w-[98px] border-r border-[#c9ccd1] bg-[#e0e0e0] text-[#888]">{off}</button>
    </div>
  );
}

const members = ["KL1(7)", "KL1(17)", "KL2(7)", "KL2(18)", "KL3(1)", "KL3(18)", "KL4(1)", "KL4(18)", "KL5(1)", "KL5(8)"];

function Fold() {
  return (
    <svg viewBox="0 0 10 10" className="size-2.5" aria-hidden="true">
      <path d="M9 0v9H0z" fill="#333" />
    </svg>
  );
}

function ComponentPanel() {
  return (
    <section className="flex h-[497px] shrink-0 flex-col border border-[#c9ccd1] bg-white">
      <PanelBar />
      <PanelTabs on="构件列表" off="图纸管理" />
      <div className="flex h-11 shrink-0 items-center bg-[#eee] pl-1.5 text-[#333]">
        <button className="flex items-center gap-[7px]"><Icon name="newDoc" className="size-[22px]" />新建<Caret className="ml-1" /></button>
        <button className="ml-[18px] flex items-center gap-[7px]"><Icon name="deleteDoc" className="size-[22px]" />删除</button>
        <button className="ml-[22px] flex items-center gap-[7px]"><Icon name="copyDoc" className="size-[22px]" />复制</button>
        <button className="ml-[22px] flex items-center gap-[7px]"><Icon name="floorCopy" className="size-[22px]" />层间复制</button>
        <button aria-label="更多" className="mr-0.5 ml-auto">
          <svg viewBox="0 0 11 8" className="h-2 w-[11px]">
            <path d="M0 0l5 4-5 4zM6 0l5 4-5 4z" fill="#444" />
          </svg>
        </button>
      </div>
      <div className="flex h-[30px] shrink-0 items-center border-y border-[#c9ccd1] pr-2 pl-1">
        <input aria-label="搜索构件" placeholder="搜索构件..." className="min-w-0 flex-1 placeholder:text-[#808080] outline-none" />
        <svg viewBox="0 0 16 16" className="size-4" aria-hidden="true">
          <circle cx="6.5" cy="6.5" r="5.5" fill="none" stroke="#2f86c1" strokeWidth="1.8" />
          <path d="M10.500 10.500L15 15" stroke="#2f86c1" strokeWidth="3" />
        </svg>
      </div>
      <div className="relative min-h-0 flex-1 overflow-hidden">
        <ul className="grid h-[378px] auto-rows-fr">
          <li className="flex items-center gap-[11px] pl-4"><Fold />梁</li>
          <li className="flex items-center gap-[11px] pl-[46px]"><Fold />楼层框架梁</li>
          {members.map((m, i) => (
            <li key={m} className="flex pl-[91px]">
              <button className={`w-[93px] pl-1.5 text-left ${i === 0 ? "bg-[#c8d9f0]" : ""}`}>{m}</button>
            </li>
          ))}
        </ul>
        <div className="absolute top-[19px] right-2 h-12 w-3 rounded-full bg-[#cacaca]" />
      </div>
    </section>
  );
}

type Prop = { name: string; value?: ReactNode; plain?: boolean };

const props: Prop[] = [
  { name: "名称", value: "L4(8)" },
  { name: "结构类别", value: "非框架梁" },
  { name: "跨数量", value: "8", plain: true },
  { name: "截面宽度(mm)", value: "300" },
  { name: "截面高度(mm)", value: "700" },
  { name: "轴线距梁左边...", value: "(150)", plain: true },
  {
    name: "箍筋",
    value: (
      <span className="flex items-center gap-0.5 pb-1 pl-0.5 leading-5 text-[#555]">
        <svg viewBox="0 0 14 14" className="size-3.5" aria-hidden="true">
          <path d="M5 0v12M9 0v12M2 12h10" stroke="#111" strokeWidth="1.4" />
          <ellipse cx="7" cy="6" rx="6" ry="3.5" fill="none" stroke="#111" strokeWidth="1.4" />
          <path d="M1 6h12" stroke="#111" />
        </svg>
        10@200(2)
      </span>
    ),
  },
  { name: "肢数", value: "2" },
  { name: "上部通长筋" },
  { name: "下部通长筋" },
  { name: "侧面构造或受..." },
  { name: "拉筋" },
  { name: "定额类别", value: "有梁板" },
  { name: "材质", value: "商品混凝土" },
  { name: "混凝土类型", value: "(混凝土20石)" },
  { name: "混凝土强度等级", value: "(C35)" },
];

function PropertyPanel() {
  return (
    <section className="mt-1.5 flex min-h-0 flex-1 flex-col overflow-hidden border border-b-0 border-[#c9ccd1] bg-white">
      <PanelBar />
      <PanelTabs on="属性列表" off="图层管理" />
      <div className="flex min-h-0 flex-1">
        <div className="min-h-0 flex-1 overflow-hidden">
          <table className="h-[535px] w-full table-fixed border-collapse leading-6">
            <colgroup>
              <col className="w-[33px]" />
              <col className="w-[151px]" />
              <col className="w-[209px]" />
              <col />
            </colgroup>
            <thead>
              <tr className="h-[30px] text-[#555]">
                <th aria-label="序号" />
                <th className="border-r border-b border-[#c9ccd1] bg-[#efefef] font-normal">属性名称</th>
                <th className="border-r border-b border-[#c9ccd1] bg-[#efefef] font-normal">属性值</th>
                <th aria-label="附加" className="bg-[#efefef]" />
              </tr>
            </thead>
            <tbody>
              {props.map((p, i) => (
                <tr key={p.name}>
                  <td className="border-r border-b border-[#c9ccd1] bg-[#f0f0f0] p-0 text-center text-[#555]">{i + 1}</td>
                  <td className={`overflow-hidden border-r border-b border-[#c9ccd1] py-0 pr-0 pl-1 whitespace-nowrap ${p.plain ? "" : "text-[#2a66ff]"}`}>{p.name}</td>
                  <td className="border-r border-b border-[#c9ccd1] py-0 pr-0 pl-[5px]">{p.value}</td>
                  <td className="p-0" />
                </tr>
              ))}
            </tbody>
          </table>
        </div>
        <div className="flex w-[22px] flex-col items-center">
          <svg viewBox="0 0 12 6" className="mt-1 h-1.5 w-3" aria-hidden="true"><path d="M0 6h12L6 0z" fill="#333" /></svg>
          <div className="mt-1 h-[277px] w-3 rounded-full bg-[#cacaca]" />
          <svg viewBox="0 0 12 6" className="mt-auto mb-1 h-1.5 w-3" aria-hidden="true"><path d="M0 0h12L6 6z" fill="#333" /></svg>
        </div>
      </div>
    </section>
  );
}

// axes in drawing units, bright ones first in each direction
const xAxes: [string, number, string][] = [
  ["1", 1263, "#ff0000"], ["2", 1283, "#ff0000"], ["3", 1310, "#ff0000"], ["4", 1343, "#ff0000"],
  ["5", 1373, "#ff0000"], ["6", 1406, "#ff0000"], ["7", 1436, "#ff0000"], ["8", 1469, "#ff0000"],
  ["9", 1497, "#800000"], ["10", 1531, "#800000"], ["11", 1557, "#800000"], ["12", 1578, "#800000"], ["13", 1606, "#800000"],
];

const yAxes: [string, number, string][] = [
  ["AA", 252, "#800000"], ["Y", 272, "#800000"], ["X", 297, "#800000"], ["W", 327, "#ee0000"], ["V", 357, "#ee0000"],
  ["U", 388, "#ee0000"], ["T", 419, "#ee0000"], ["S", 449, "#dd0000"], ["R", 480, "#dd0000"], ["Q", 510, "#dd0000"],
  ["P", 540, "#800000"], ["N", 572, "#800000"], ["M", 602, "#800000"], ["L", 632, "#800000"], ["K", 663, "#800000"],
  ["J", 693, "#800000"], ["H", 723, "#800000"], ["G", 753, "#800000"], ["F", 784, "#800000"], ["E", 814, "#800000"],
  ["D", 845, "#800000"], ["C", 876, "#800000"], ["B", 909, "#800000"], ["A", 930, "#800000"],
];

const topLabels: [string, number][] = [
  ["1", 1262], ["2", 1283], ["3", 1310], ["1", 1331], ["4", 1343], ["2", 1356], ["5", 1371], ["3", 1386], ["6", 1407],
  ["7", 1435], ["8", 1469], ["9", 1497], ["10", 1529], ["11", 1557], ["12", 1578], ["13", 1608],
];

const longDims = "8003006008003900860040083006008300690080030086004300800600830068003009008300";
const shortDims = "470083006048300970063008400390048006";

function bubble(cx: number, cy: number) {
  const r = 17;
  const k = 7;
  return `M${cx - k} ${cy - r}h${k * 2}l${r - k} ${r - k}v${k * 2}l${k - r} ${r - k}h${-k * 2}l${k - r} ${k - r}v${-k * 2}z`;
}

function Model() {
  return (
    <svg viewBox="712 212 1446 735" className="h-full w-full font-['Noto_Sans','Noto_Sans_CJK_SC',sans-serif]" aria-label="模型视图">
      <path
        d="M1367 252H1557V272H1578V553H1606V683H1577V713L1516 835V947H1263V443L1278 388H1314L1315 337L1344 343z"
        fill="#666"
        stroke="#8a8a8a"
      />

      {/* openings, beams and walls of the upper half */}
      <g transform="translate(1200 205) scale(0.3333)" fill="none" strokeWidth="4">
        <path d="M513 530h52v50h-52zM945 530h52v50h-22v14h-30zM228 693h18v24h-18zM1100 935h32v68h-32zM503 146h26v12h-26z" fill="#000" />
        <path
          d="M480 240h653M460 313h100M610 398h523M343 430h790M343 488h790M343 520h790M570 583h48M893 583h107M620 673h513M620 704h513M620 763h513M620 794h513M620 857h513M330 673h95M190 736h430M620 983h450M620 1037h513M620 1069h599M190 1096h428"
          stroke="#2fca2f"
        />
        <path
          d="M703 250v1025M1068 142v683M622 645v312M512 465v375M433 550v350M340 550l-6 80M567 530v50M1130 1040v205M1100 920v80M532 142v63l28 108l-35 77l-3 50M560 313l58-35M715 142l-3 108M905 142l-8 123"
          stroke="#2fca2f"
        />
        <path d="M345 393l87 20M440 402h90M455 352l60 10M455 370l75 18h75" stroke="#2fca2f" strokeDasharray="28 10" />
        <path d="M190 200l60 18M190 295l60 16" stroke="#007000" />
        <path d="M342 142L192 715M412 142L295 597M500 142L378 618M230 212l255 68M190 295l335 90" stroke="#800000" strokeDasharray="24 4" />
        <path d="M418 142l-73 253" stroke="#999" strokeDasharray="12 5" />
        <path d="M437 430v120M418 645v25M568 600v525M1160 641l59 134M257 693v24" stroke="#c4c4c4" />
        <path d="M488 205h42M450 335h108M510 492h58v145M510 492v36h50v-36M945 492h55v10M952 528h48M977 630v10M257 670v14M1076 900v103M1121 900v30M1076 933h55" stroke="#ffee22" />
        <path d="M558 334h577" stroke="#6f9fe0" strokeWidth="5" />
        <path d="M495 331h12M538 331h14M578 331h15M620 331h10M655 331h14M700 331h8M750 331h14M795 331h8M850 335h5M888 331h8M935 331h14M980 331h8M1028 331h10M1058 331h10M1098 335h5M487 318v15" stroke="#fff" strokeWidth="6" />
      </g>

      {/* lower half */}
      <g transform="translate(1200 580) scale(0.3333)" fill="none" strokeWidth="4">
        <path
          d="M192 140h18l14 14v76h-32zM893 157h36v9h-36zM908 250h36v60h-30zM930 315h24v24h-24zM1015 255h22v28h-22zM1072 310h56v28h-56zM556 680h22v22h-22zM920 745h24v12h-24zM532 990h34v50h-34z"
          fill="#000"
        />
        <path
          d="M620 97h599M620 127h599M808 187h411M808 217h411M190 245h805M995 286h224M995 307h136M890 313h97M840 335h108M1075 376h56M995 475h95M995 496h80M995 550h58M995 583h42M190 523h810M190 798h758M886 280v138M996 450v230M1085 342v26M1094 342v26M1200 286v20M920 757h24M1015 268h22M567 680v22M905 1000v45M883 968v18"
          stroke="#2fca2f"
        />
        <path
          d="M190 78h55M190 290h55M205 227h40M893 205h50M1067 157v183M1117 157v70M1067 227h152M945 268h70M960 288v50M1180 295h20M893 353h27M515 703v-58h107v58M568 645v35M215 1027h30M908 1005v40"
          stroke="#ffee22"
        />
        <path d="M190 438h78M240 434h78" stroke="#ff0000" strokeWidth="6" />
        <path d="M568 0v75M568 157v758M757 157v86M930 353h15v110M945 470v295M226 135v68M883 250v22M905 270h8v40M883 890v60M923 935v30M919 757v35M553 668v35M582 668v35M505 990v30M865 990v40M190 135h35" stroke="#c4c4c4" />
        <path
          d="M565 72h6M565 148h6M626 159h8M697 159h8M206 137h6M224 203h9M224 223h9M883 245h14M806 245h10M922 353h8M940 408h8M940 426h8M548 648h6M583 648h6M548 666h6M583 666h6M565 982h6M900 962h9M928 965h8M921 765h8M242 523h8M330 523h8M428 523h8M512 523h8M617 523h8M700 523h8M892 523h8M242 245h8M330 245h8M428 245h8M617 245h8M242 798h8M428 798h8M617 798h8M800 798h8"
          stroke="#7a1fe0"
          strokeWidth="8"
        />
      </g>

      {xAxes.map(([n, x, c]) => (
        <path key={n} d={`M${x} 252V930`} stroke={c} strokeWidth={c === "#ff0000" ? 1.6 : 1.3} />
      ))}
      {yAxes.slice(1).map(([n, y, c]) => (
        <path key={n} d={`M1263 ${y}H1606`} stroke={c} strokeWidth="1.4" />
      ))}

      <g fill="none" stroke="#007800" strokeWidth="1.3">
        {topLabels.map(([n, x], i) => (
          <path key={n + i} d={bubble(x, 231)} />
        ))}
        {xAxes.map(([n, x]) => (
          <path key={n} d={bubble(x, 929)} />
        ))}
        {yAxes.map(([n, y]) => (
          <Fragment key={n}>
            <path d={bubble(1228, y)} />
            <path d={bubble(1642, y)} />
          </Fragment>
        ))}
      </g>

      <g fill="#fff" fontSize="25" textAnchor="middle">
        {topLabels.map(([n, x], i) => (
          <text key={n + i} x={x} y="238">{n}</text>
        ))}
        {xAxes.slice(1).map(([n, x]) => (
          <text key={n} x={x} y="935">{n}</text>
        ))}
        {yAxes.map(([n, y]) => (
          <Fragment key={n}>
            <text x="1228" y={y + 9}>{n}</text>
            <text x="1642" y={y + 9}>{n}</text>
          </Fragment>
        ))}
      </g>

      {/* dimension chains crowd into solid bands at this zoom */}
      <g fill="#fff" stroke="#fff" strokeWidth="0.6" fontSize="18">
        {[0, 4].map((d) => (
          <Fragment key={d}>
            <text x={1246 + d} y={249 + d}>{shortDims}</text>
            <text x={1246 + d} y={942 + d}>{shortDims}</text>
            <text transform={`translate(${1259 + d} ${945 - d}) rotate(-90)`}>{longDims.slice(0, 69)}</text>
            <text transform={`translate(${1620 + d} ${945 - d}) rotate(-90)`}>{longDims.slice(0, 69)}</text>
          </Fragment>
        ))}
      </g>

      {/* axis tripod */}
      <path d="M786 866V838" stroke="#00e020" strokeWidth="5" />
      <path d="M786 826l8 20h-16z" fill="#00e020" />
      <path d="M792 872h26" stroke="#f01010" strokeWidth="5" />
      <path d="M832 872l-18-8v16z" fill="#f01010" />
      <circle cx="786" cy="872" r="8" fill="#0000f0" />
      <text x="787" y="825" fill="#00c020" fontSize="20" textAnchor="middle">Y</text>
      <text x="841" y="880" fill="#f01010" fontSize="22" textAnchor="middle">X</text>
    </svg>
  );
}

function Cube({ glass }: { glass?: boolean }) {
  return (
    <svg viewBox="0 0 36 36" className="size-9" aria-hidden="true">
      <path d="M1 10L9 1h26v25l-9 9H1z" fill={glass ? "#6d7884" : "#424a56"} stroke="#1b1e22" strokeWidth="1.4" />
      <path d="M1 10h25v25M26 10l9-9" fill="none" stroke="#1b1e22" strokeWidth="1.4" />
      {glass && (
        <>
          <path d="M3 9l6-7h24l-7 7z" fill="#424a56" />
          <path d="M9 10v17h26M9 27l-8 8" fill="none" stroke="#333b45" strokeWidth="1.4" />
        </>
      )}
    </svg>
  );
}

function ViewTools() {
  return (
    <div className="absolute top-px right-0 flex h-[357px] w-12 flex-col items-center rounded-md border border-[#5c5c5c] bg-[#4e4e4e] pt-[19px]">
      <button aria-label="动态观察">
        <svg viewBox="0 0 36 32" className="h-8 w-9">
          <circle cx="17" cy="17" r="14" fill="#5a626e" stroke="#1b1e22" strokeWidth="1.5" />
          <path d="M3 25C14 24 24 18 27 10" fill="none" stroke="#1b1e22" strokeWidth="2" />
          <circle cx="29" cy="9" r="6" fill="#707a86" stroke="#1b1e22" strokeWidth="1.5" />
          <circle cx="4" cy="25" r="3" fill="#4e4e4e" stroke="#1b1e22" strokeWidth="1.5" />
        </svg>
      </button>
      <button className="relative mt-2.5" aria-label="三维视图">
        <Cube />
        <span className="absolute right-2.5 bottom-0.5 text-xs leading-4 text-[#15181c]">3D</span>
      </button>
      <button className="mt-2" aria-label="线框"><Cube glass /></button>
      <Caret className="mt-2 brightness-50" />
      <button className="mt-2.5" aria-label="俯视"><Cube /></button>
      <Caret className="mt-2 brightness-50" />
      <button className="mt-2.5" aria-label="旋转">
        <svg viewBox="0 0 36 36" className="size-9">
          <path d="M30 26A15 15 0 1 1 27 8M32 3v9h-9" fill="none" stroke="#23272c" strokeWidth="3.5" />
        </svg>
      </button>
      <Caret className="mt-2 brightness-50" />
      <div className="mt-2 h-px w-8 bg-[#25282c]" />
      <button className="mt-2" aria-label="显示设置">
        <svg viewBox="0 0 36 36" className="size-9">
          <path d="M1 5l4-4h26l4 4v30H1zM1 5h34" fill="#424a56" stroke="#1b1e22" strokeWidth="1.4" />
          <path d="M5 9l2 3 4-4M21 9l2 3 4-4M5 15h3v3H5zM5 21h3v3H5zM5 27h3v3H5zM21 15h3v3h-3zM21 21h3v3h-3zM21 27h3v3h-3zM11 17h3M11 23h3M11 29h3M27 17h3M27 23h3M27 29h3M17 14v17" fill="none" stroke="#15181c" strokeWidth="1.5" />
        </svg>
      </button>
    </div>
  );
}

const actions: { label: string; off?: boolean }[] = [
  { label: "复制跨数据" },
  { label: "粘贴跨数据", off: true },
  { label: "输入当前列数据", off: true },
  { label: "删除当前列数据", off: true },
  { label: "页面设置" },
  { label: "调换起始跨" },
  { label: "悬臂钢筋代号" },
];

const heads = ["位置", "名称", "跨号", "次梁宽度", "次梁加筋", "吊筋", "吊筋锚固", "箍筋加密长度", "腋长", "腋高", "加腋钢筋", "其他箍筋"];
const spans = [1, 2, 3, 4, 5, 6, 7, 8];

function SpanTable() {
  const line = "border-r border-b border-[#c4c7cb]";
  return (
    <section className="relative flex h-[340px] shrink-0 flex-col border border-[#c9ccd1] bg-white">
      <PanelBar />
      <div className="flex h-[33px] shrink-0 items-center border-b border-[#c9ccd1] bg-[#eee] pl-[11px] text-[#555]">梁平法表格</div>
      <div className="flex h-[45px] shrink-0 items-center gap-[21px] border-b border-[#c9ccd1] bg-[#eee] pl-1.5 text-[#333]">
        {actions.map((a) => (
          <button key={a.label} disabled={a.off} className={a.off ? "text-[#b5b5b5]" : ""}>
            {a.label}
          </button>
        ))}
      </div>
      <div className="flex h-[221px] shrink-0">
        <div className="min-w-0 flex-1 overflow-hidden">
          <table className="h-[305px] w-full table-fixed border-collapse leading-[25px]">
            <colgroup>
              <col className="w-[11px]" />
              <col className="w-[91px]" />
              <col className="w-[91px]" />
              <col className="w-[92px]" />
              <col className="w-[121px]" />
              <col className="w-[122px]" />
              <col className="w-[121px]" />
              <col className="w-[122px]" />
              <col className="w-[151px]" />
              <col className="w-[121px]" />
              <col className="w-[122px]" />
              <col className="w-[122px]" />
              <col className="w-[121px]" />
              <col />
            </colgroup>
            <thead>
              <tr className="h-[53px]">
                <th aria-label="序号" className="p-0" />
                {heads.map((h) => (
                  <th
                    key={h}
                    className={`p-0 font-normal ${h === "跨号" ? "border border-[#6aa9ea] bg-[#80b9fa] font-medium text-white" : "border-r border-b border-[#d3d5d8] bg-[#efefef] text-[#444]"}`}
                  >
                    {h}
                  </th>
                ))}
                <th aria-label="附加" className="bg-[#efefef] p-0" />
              </tr>
            </thead>
            <tbody>
              {spans.map((n) => (
                <tr key={n}>
                  <td className={`p-0 text-center ${n === 1 ? "bg-[#80b9fa] font-bold text-white" : "border-b border-[#c4c7cb] bg-[#f0f0f0] text-[#555]"}`}>{n}</td>
                  {n === 1 && (
                    <>
                      <td rowSpan={8} className={`py-0 pr-0 pl-1 whitespace-pre ${line}`}>{"<1-0,W\n+2743;12\n,W\n+2743>"}</td>
                      <td rowSpan={8} className={`py-0 pr-0 pl-[5px] ${line}`}>L4(8)</td>
                    </>
                  )}
                  <td className={`relative py-0 pr-0 pl-[5px] ${line}`}>
                    {n}
                    {n === 1 && (
                      <>
                        <span className="absolute inset-0 border-2 border-t-0 border-[#6aa9ea]" />
                        <span className="absolute -right-1 -bottom-1 size-[7px] bg-[#6aa9ea]" />
                      </>
                    )}
                  </td>
                  <td className={line} />
                  <td className={line} />
                  <td className={line} />
                  <td className={line} />
                  <td className={`py-0 pr-0 pl-[5px] ${line}`}>max(1.5*h,500)</td>
                  <td className={line} />
                  <td className={line} />
                  <td className={line} />
                  <td className={line} />
                  <td />
                </tr>
              ))}
            </tbody>
          </table>
        </div>
        <div className="flex w-[22px] flex-col items-center pt-1">
          <svg viewBox="0 0 12 8" className="h-2 w-3" aria-hidden="true"><path d="M0 8h12L6 0z" fill="#333" /></svg>
          <div className="mt-1 h-[120px] w-3 rounded-full bg-[#cacaca]" />
          <svg viewBox="0 0 12 8" className="mt-auto mb-1 h-2 w-3" aria-hidden="true"><path d="M0 0h12L6 8z" fill="#333" /></svg>
        </div>
      </div>
      <div className="flex flex-1 items-center justify-between pr-[26px] pl-0.5">
        <svg viewBox="0 0 8 12" className="h-3 w-2" aria-hidden="true"><path d="M8 0v12L0 6z" fill="#333" /></svg>
        <div className="flex items-center gap-[3px]">
          <div className="h-3 w-[431px] rounded-full bg-[#cacaca]" />
          <svg viewBox="0 0 8 12" className="h-3 w-2" aria-hidden="true"><path d="M0 0v12l8-6z" fill="#333" /></svg>
        </div>
      </div>
      {/* callout round the haunch columns */}
      <div className="pointer-events-none absolute top-[79px] right-[158px] h-[207px] w-[348px] border-7 border-[#fa3838]" />
    </section>
  );
}

function StatusBar() {
  const box = "flex h-[37px] items-center justify-center border-2 border-[#a3a3a5] bg-[#cfcfd1]";
  return (
    <footer className="flex h-[46px] shrink-0 items-center overflow-hidden bg-[#dddddf] pt-0.5 whitespace-nowrap text-[#333]">
      <span className="w-[310px] pl-0.5">X = 295301 Y = 402995</span>
      <span className="w-[119px]">层高：4.9</span>
      <span className="w-[199px]">标高：-4.9~0</span>
      <span className="w-[156px]">1(1)</span>
      <span className="w-[120px]">隐藏：&nbsp;0</span>
      <div className="mr-0.5 flex gap-[5px]">
        <button aria-label="正交" className={`w-[37px] ${box}`}>
          <svg viewBox="0 0 20 20" className="size-5"><path d="M2 1v17h17M2 11h6v7" fill="none" stroke="#333" strokeWidth="1.6" /></svg>
        </button>
        <button aria-label="捕捉" className="flex h-[37px] w-[54px] items-center justify-center gap-3 border-2 border-[#4a9ff9] bg-white">
          <svg viewBox="0 0 24 24" className="size-6">
            <path d="M4 3h18v19H4z" fill="none" stroke={BLUE} strokeWidth="1.6" />
            <path d="M1 1h6v6H1z" fill="#ffc9a0" stroke="#f07c2c" strokeWidth="1.6" />
          </svg>
          <Caret />
        </button>
        <button disabled aria-label="交点" className={`w-[37px] opacity-80 ${box}`}>
          <svg viewBox="0 0 24 24" className="size-6">
            <path d="M1 1l22 22M23 1L1 23" stroke="#777" strokeWidth="1.3" />
            <circle cx="12" cy="12" r="2.5" fill="#666" />
          </svg>
        </button>
        <button aria-label="角度" className={`w-[54px] gap-3 ${box}`}>
          <svg viewBox="0 0 24 20" className="h-5 w-6">
            <path d="M1 18h22M1 18L17 1" fill="none" stroke="#333" strokeWidth="1.5" />
            <circle cx="9" cy="9" r="3" fill="#333" />
          </svg>
          <Caret />
        </button>
        <button aria-label="输入" className={`w-[54px] gap-3 ${box}`}>
          <svg viewBox="0 0 26 22" className="h-[22px] w-[26px]">
            <path d="M6 1v10M1 6h10" stroke="#333" strokeWidth="1.6" />
            <path d="M10 13h15v7H10z" fill="#333" />
          </svg>
          <Caret />
        </button>
        <button className={`w-[109px] ${box}`}>跨图层选择</button>
        <button className={`w-[91px] ${box}`}>折线选择</button>
      </div>
      <span>{'按鼠标左键选择梁图元，按右键或 ESC 退出；可以通过回车键及 Shift+\\"→←↑\\" 光50 FPS'}</span>
    </footer>
  );
}

export default function App() {
  return (
    <div className="flex h-screen flex-col overflow-hidden bg-white font-['Noto_Sans','Noto_Sans_CJK_SC',sans-serif] text-[18px] leading-6 text-[#111]">
      <TabBar />
      <Ribbon />
      <OptionBar />
      <div className="flex min-h-0 flex-1">
        <Sidebar />
        <div className="ml-1.5 flex w-[446px] shrink-0 flex-col">
          <ComponentPanel />
          <PropertyPanel />
        </div>
        <div className="flex w-[7px] shrink-0 flex-col items-end bg-white pt-[294px]">
          <button aria-label="收起面板" className="flex h-[150px] w-1.5 items-center bg-[#5f6974]">
            <svg viewBox="0 0 5 8" className="h-2 w-[5px]"><path d="M5 0v8L0 4z" fill="#c3c8ce" /></svg>
          </button>
        </div>
        <main className="flex min-w-0 flex-1 flex-col">
          <div className="relative min-h-0 flex-1 overflow-hidden bg-black">
            <Model />
            <ViewTools />
          </div>
          <div className="flex h-1.5 shrink-0 justify-center bg-white">
            <button aria-label="收起表格" className="flex h-1.5 w-[150px] justify-center bg-[#5f6974]">
              <svg viewBox="0 0 8 5" className="h-[5px] w-2"><path d="M0 0h8L4 5z" fill="#c3c8ce" /></svg>
            </button>
          </div>
          <SpanTable />
        </main>
      </div>
      <StatusBar />
      <div className="flex h-[5px] shrink-0 bg-[#05070c]">
        <div className="ml-[70px] w-[515px] bg-[#ececec]" />
        <div className="ml-[378px] w-[73px] bg-[#4a4c50]" />
      </div>
    </div>
  );
}
